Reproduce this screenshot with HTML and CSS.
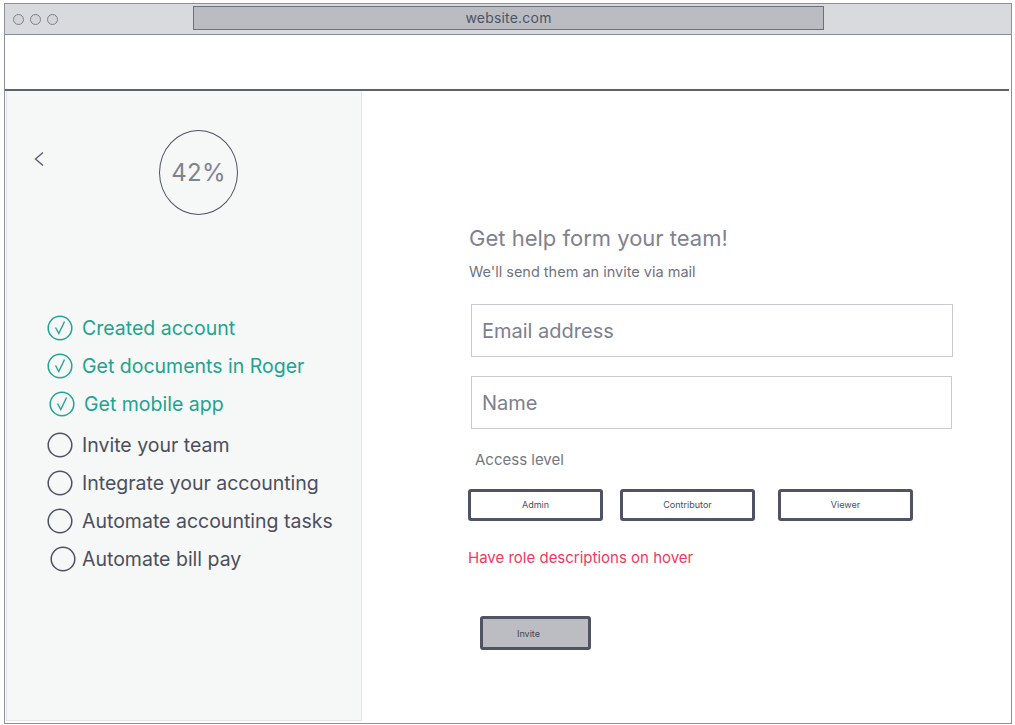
FILE: index.html
```html
<!DOCTYPE html>
<html>
<head>
<meta charset="utf-8">
<link rel="stylesheet" href="styles.css">
</head>
<body>
<div class="window">
  <div class="titlebar">
    <div class="dots"><span class="dot"></span><span class="dot"></span><span class="dot"></span></div>
    <div class="url">website.com</div>
  </div>
  <div class="header"></div>
  <div class="content">
    <aside class="sidebar">
      <div class="top">
        <svg class="back" width="12" height="16" viewBox="0 0 12 16"><path d="M10 1.5 L2.5 8 L10 14.5" fill="none" stroke="#5a5e6b" stroke-width="1.4"/></svg>
        <div class="progress">42%</div>
      </div>
      <ul class="steps">
        <li class="step done"><svg class="ic" viewBox="0 0 26 26"><circle cx="13" cy="13" r="11.8" fill="none" stroke="#22a593" stroke-width="1.5"/><path d="M8.5 12.5 L11.8 18.5 L17.5 6.5" fill="none" stroke="#22a593" stroke-width="1.4"/></svg><span>Created account</span></li>
        <li class="step done"><svg class="ic" viewBox="0 0 26 26"><circle cx="13" cy="13" r="11.8" fill="none" stroke="#22a593" stroke-width="1.5"/><path d="M8.5 12.5 L11.8 18.5 L17.5 6.5" fill="none" stroke="#22a593" stroke-width="1.4"/></svg><span>Get documents in Roger</span></li>
        <li class="step done shift1"><svg class="ic" viewBox="0 0 26 26"><circle cx="13" cy="13" r="11.8" fill="none" stroke="#22a593" stroke-width="1.5"/><path d="M8.5 12.5 L11.8 18.5 L17.5 6.5" fill="none" stroke="#22a593" stroke-width="1.4"/></svg><span>Get mobile app</span></li>
        <li class="step first-todo"><svg class="ic" viewBox="0 0 26 26"><circle cx="13" cy="13" r="11.8" fill="none" stroke="#4e5262" stroke-width="1.5"/></svg><span>Invite your team</span></li>
        <li class="step"><svg class="ic" viewBox="0 0 26 26"><circle cx="13" cy="13" r="11.8" fill="none" stroke="#4e5262" stroke-width="1.5"/></svg><span>Integrate your accounting</span></li>
        <li class="step"><svg class="ic" viewBox="0 0 26 26"><circle cx="13" cy="13" r="11.8" fill="none" stroke="#4e5262" stroke-width="1.5"/></svg><span>Automate accounting tasks</span></li>
        <li class="step shift2"><svg class="ic" viewBox="0 0 26 26"><circle cx="13" cy="13" r="11.8" fill="none" stroke="#4e5262" stroke-width="1.5"/></svg><span>Automate bill pay</span></li>
      </ul>
    </aside>
    <main class="main">
      <h1 class="title">Get help form your team!</h1>
      <p class="sub">We'll send them an invite via mail</p>
      <div class="field email">Email address</div>
      <div class="field name">Name</div>
      <div class="label">Access level</div>
      <div class="roles">
        <div class="role">Admin</div>
        <div class="role">Contributor</div>
        <div class="role">Viewer</div>
      </div>
      <p class="note">Have role descriptions on hover</p>
      <div class="invite">Invite</div>
    </main>
  </div>
</div>
</body>
</html>
```

FILE: styles.css
```css
* { box-sizing: border-box; }
html, body { margin: 0; padding: 0; background: #ffffff; }
body { font-family: Inter, "Noto Sans", sans-serif; }

.window {
  margin: 3px 0 0 4px;
  width: 1008px;
  height: 721px;
  border: 1px solid #8d9099;
  display: flex;
  flex-direction: column;
  overflow: hidden;
}

.titlebar {
  height: 31px;
  background: #d9dadd;
  border-bottom: 1px solid #878a94;
  display: flex;
  align-items: center;
  padding-left: 8px;
  flex: none;
}
.dots { display: flex; gap: 6px; }
.dot {
  width: 11px; height: 11px;
  border-radius: 50%;
  border: 1px solid #7e818b;
  background: #d3d4d8;
}
.url {
  margin-left: 135px;
  width: 631px;
  height: 24px;
  margin-top: -2px;
  background: #babcc2;
  border: 1px solid #6d707b;
  color: #4f5361;
  font-size: 14px;
  display: flex;
  align-items: center;
  justify-content: center;
  letter-spacing: 0.2px;
  padding-bottom: 1px;
}

.header {
  height: 56px;
  flex: none;
  border-bottom: 2px solid #5f626e;
  margin-right: 2px;
}

.content {
  flex: 1;
  display: flex;
}

.sidebar {
  width: 356px;
  margin-left: 1px;
  margin-bottom: 2px;
  background: #f6f7f7;
  border: 1px solid #e2e4e5;
  border-top: none;
  padding-top: 39px;
  flex: none;
}
.top {
  display: flex;
  align-items: flex-start;
  padding-left: 26px;
}
.back { margin-top: 21px; flex: none; }
.progress {
  margin-left: 114px;
  width: 79px;
  height: 85px;
  border-radius: 50%;
  border: 1.5px solid #4e5262;
  display: flex;
  align-items: center;
  justify-content: center;
  font-size: 24px;
  color: #7f8291;
  letter-spacing: 0.3px;
}

.steps {
  list-style: none;
  margin: 100px 0 0 0;
  padding: 0 0 0 40px;
  display: flex;
  flex-direction: column;
  gap: 13px;
}
.step {
  display: flex;
  align-items: center;
  height: 25px;
  font-size: 19.5px;
  color: #4b4f5d;
}
.step.done { color: #21a391; }
.step.shift1 { padding-left: 2px; }
.step.first-todo { margin-top: 3px; }
.step.shift2 { padding-left: 3px; }
.ic { width: 26px; height: 26px; flex: none; margin-right: 9px; }
.step.shift2 .ic { margin-right: 6px; }

.main {
  flex: 1;
  padding: 132px 0 0 107px;
}
.title {
  margin: 0;
  font-weight: 400;
  font-size: 22px;
  line-height: 30px;
  color: #7f8290;
}
.sub {
  margin: 10px 0 0 0;
  font-size: 14.5px;
  line-height: 18px;
  color: #6f7380;
}
.field {
  margin: 23px 0 0 2px;
  width: 482px;
  height: 53px;
  border: 1px solid #c8cacf;
  display: flex;
  align-items: center;
  padding-left: 10px;
  font-size: 20px;
  color: #7d808e;
}
.field.name { margin-top: 19px; width: 481px; }
.label {
  margin: 22px 0 0 6px;
  font-size: 15px;
  line-height: 18px;
  color: #737784;
}
.roles {
  margin-top: 20px;
  display: flex;
  gap: 17px;
  margin-left: -1px;
}
.role {
  width: 135px;
  height: 32px;
  border: 3px solid #4f5363;
  border-radius: 3px;
  font-size: 9px;
  color: #4a4e5b;
  display: flex;
  justify-content: center;
  padding-top: 7px;
}
.role:nth-child(3) { margin-left: 6px; }
.note {
  margin: 28px 0 0 -1px;
  font-size: 15px;
  line-height: 18px;
  color: #f2385f;
}
.invite {
  margin: 49px 0 0 11px;
  width: 111px;
  height: 34px;
  background: #bbbdc3;
  border: 3px solid #4f5363;
  border-radius: 3px;
  font-size: 9px;
  color: #3f4350;
  display: flex;
  align-items: center;
  padding-left: 34px;
}
```
